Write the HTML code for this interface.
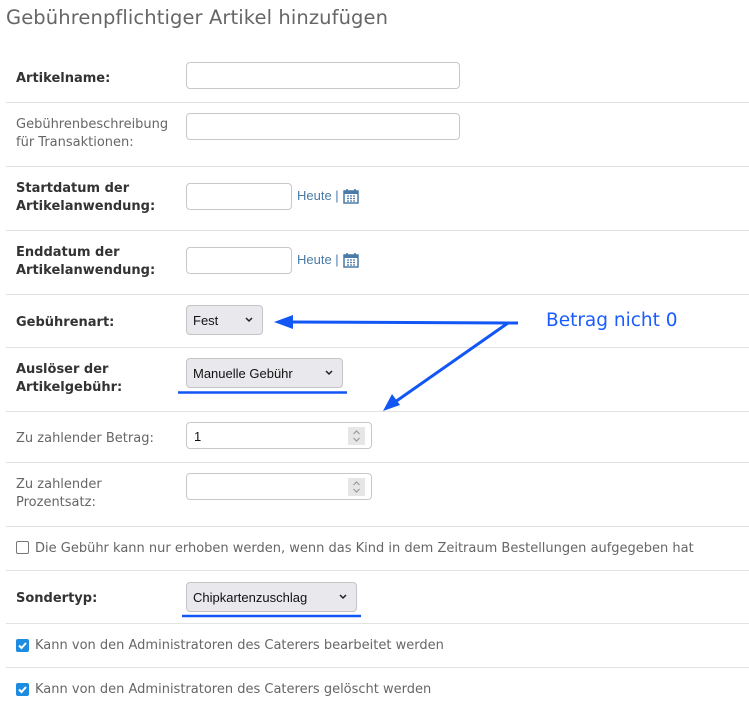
<!DOCTYPE html>
<html><head><meta charset="utf-8"><style>
body{margin:0;width:749px;height:706px;background:#fff;position:relative;overflow:hidden;font-family:"DejaVu Sans",sans-serif;font-size:13px;color:#666}
.a{position:absolute}
h1{position:absolute;left:6px;top:6px;margin:0;font-weight:normal;font-size:19.5px;color:#666;letter-spacing:0.1px}
.hr{position:absolute;left:6px;width:743px;height:1px;background:#e3e3e3}
.lb{position:absolute;left:16px;line-height:18px;font-size:13px}
.b{font-weight:bold;color:#333}
.in{position:absolute;border:1px solid #c8c8c8;border-radius:4px;background:#fff;box-sizing:border-box}
.sel{position:absolute;border:1px solid #c4c4c4;border-radius:4px;background:#e9e9ed;box-sizing:border-box;font-family:"Liberation Sans",sans-serif;font-size:13px;color:#111;padding-left:6px}
.sel svg{position:absolute;right:9px;top:11px}
.heute{position:absolute;font-family:"Liberation Sans",sans-serif;font-size:13px;color:#4a7aa6}
.spin{position:absolute;right:6px;top:4px;width:17px;height:18px;background:#e6e6e6}
.cb{position:absolute;left:16px;width:13px;height:13px;border-radius:2px;box-sizing:border-box}
.ck{background:#1d8ce0}
.un{border:1.5px solid #777;background:#fff}
.ct{position:absolute;left:35px;font-size:13px;color:#666}
</style></head><body>
<h1>Gebührenpflichtiger Artikel hinzufügen</h1>

<div class="lb b" style="top:70px">Artikelname:</div>
<div class="in" style="left:186px;top:62px;width:274px;height:27px"></div>
<div class="hr" style="top:102px"></div>

<div class="lb" style="top:116px">Gebührenbeschreibung<br>für Transaktionen:</div>
<div class="in" style="left:186px;top:113px;width:274px;height:27px"></div>
<div class="hr" style="top:166px"></div>

<div class="lb b" style="top:180px">Startdatum der<br>Artikelanwendung:</div>
<div class="in" style="left:186px;top:183px;width:106px;height:27px"></div>
<div class="heute" style="left:297px;top:188px">Heute |</div>
<svg class="a" style="left:343px;top:188px" width="16" height="16" viewBox="0 0 16 16"><rect x="1" y="3" width="14" height="12" fill="none" stroke="#4a7aa6" stroke-width="1.5"/><rect x="1" y="3" width="14" height="3" fill="#4a7aa6"/><path d="M4 1v4M12 1v4" stroke="#4a7aa6" stroke-width="1.6"/><path d="M4 8h2M7 8h2M10 8h2M4 10.5h2M7 10.5h2M10 10.5h2M4 13h2M7 13h2M10 13h2" stroke="#4a7aa6" stroke-width="1.2"/></svg>
<div class="hr" style="top:230px"></div>

<div class="lb b" style="top:244px">Enddatum der<br>Artikelanwendung:</div>
<div class="in" style="left:186px;top:247px;width:106px;height:27px"></div>
<div class="heute" style="left:297px;top:252px">Heute |</div>
<svg class="a" style="left:343px;top:252px" width="16" height="16" viewBox="0 0 16 16"><rect x="1" y="3" width="14" height="12" fill="none" stroke="#4a7aa6" stroke-width="1.5"/><rect x="1" y="3" width="14" height="3" fill="#4a7aa6"/><path d="M4 1v4M12 1v4" stroke="#4a7aa6" stroke-width="1.6"/><path d="M4 8h2M7 8h2M10 8h2M4 10.5h2M7 10.5h2M10 10.5h2M4 13h2M7 13h2M10 13h2" stroke="#4a7aa6" stroke-width="1.2"/></svg>
<div class="hr" style="top:294px"></div>

<div class="lb b" style="top:314px">Gebührenart:</div>
<div class="sel" style="left:186px;top:305px;width:77px;height:30px;line-height:30px">Fest<svg width="8" height="6"><path d="M1 1l3 3 3-3" stroke="#222" stroke-width="1.5" fill="none"/></svg></div>
<div class="hr" style="top:347px"></div>

<div class="lb b" style="top:361px">Auslöser der<br>Artikelgebühr:</div>
<div class="sel" style="left:186px;top:358px;width:157px;height:30px;line-height:30px">Manuelle Gebühr<svg width="8" height="6"><path d="M1 1l3 3 3-3" stroke="#222" stroke-width="1.5" fill="none"/></svg></div>
<div class="hr" style="top:411px"></div>

<div class="lb" style="top:430px">Zu zahlender Betrag:</div>
<div class="in" style="left:186px;top:422px;width:186px;height:27px;font-family:'Liberation Sans',sans-serif;color:#111;padding:6px 0 0 7px">1<div class="spin"><svg width="17" height="18"><path d="M5.5 7l3-3 3 3M5.5 11l3 3 3-3" stroke="#999" stroke-width="1.2" fill="none"/></svg></div></div>
<div class="hr" style="top:462px"></div>

<div class="lb" style="top:476px">Zu zahlender<br>Prozentsatz:</div>
<div class="in" style="left:186px;top:473px;width:186px;height:27px"><div class="spin"><svg width="17" height="18"><path d="M5.5 7l3-3 3 3M5.5 11l3 3 3-3" stroke="#999" stroke-width="1.2" fill="none"/></svg></div></div>
<div class="hr" style="top:526px"></div>

<div class="cb un" style="top:541px"></div>
<div class="ct" style="top:541px">Die Gebühr kann nur erhoben werden, wenn das Kind in dem Zeitraum Bestellungen aufgegeben hat</div>
<div class="hr" style="top:570px"></div>

<div class="lb b" style="top:590px">Sondertyp:</div>
<div class="sel" style="left:186px;top:582px;width:171px;height:30px;line-height:30px">Chipkartenzuschlag<svg width="8" height="6"><path d="M1 1l3 3 3-3" stroke="#222" stroke-width="1.5" fill="none"/></svg></div>
<div class="hr" style="top:623px"></div>

<div class="cb ck" style="top:639px"><svg width="13" height="13"><path d="M3 6.5l2.5 2.5 4.5-5" stroke="#fff" stroke-width="2" fill="none"/></svg></div>
<div class="ct" style="top:638px">Kann von den Administratoren des Caterers bearbeitet werden</div>
<div class="hr" style="top:667px"></div>

<div class="cb ck" style="top:683px"><svg width="13" height="13"><path d="M3 6.5l2.5 2.5 4.5-5" stroke="#fff" stroke-width="2" fill="none"/></svg></div>
<div class="ct" style="top:682px">Kann von den Administratoren des Caterers gelöscht werden</div>

<svg class="a" style="left:0;top:0" width="749" height="706">
<path d="M518 323L290 322" stroke="#1257f5" stroke-width="3"/>
<polygon points="274,322 293,315 293,329" fill="#1257f5"/>
<path d="M508 323L395 402" stroke="#1257f5" stroke-width="3"/>
<polygon points="383,411 392,394 400,405" fill="#1257f5"/>
<path d="M178 392.5H347" stroke="#1257f5" stroke-width="2.5"/>
<path d="M182 616H361" stroke="#1257f5" stroke-width="2.5"/>
</svg>
<div class="a" style="left:546px;top:310px;font-family:'DejaVu Sans',sans-serif;font-size:18.5px;color:#1a5cff">Betrag nicht 0</div>
</body></html>
